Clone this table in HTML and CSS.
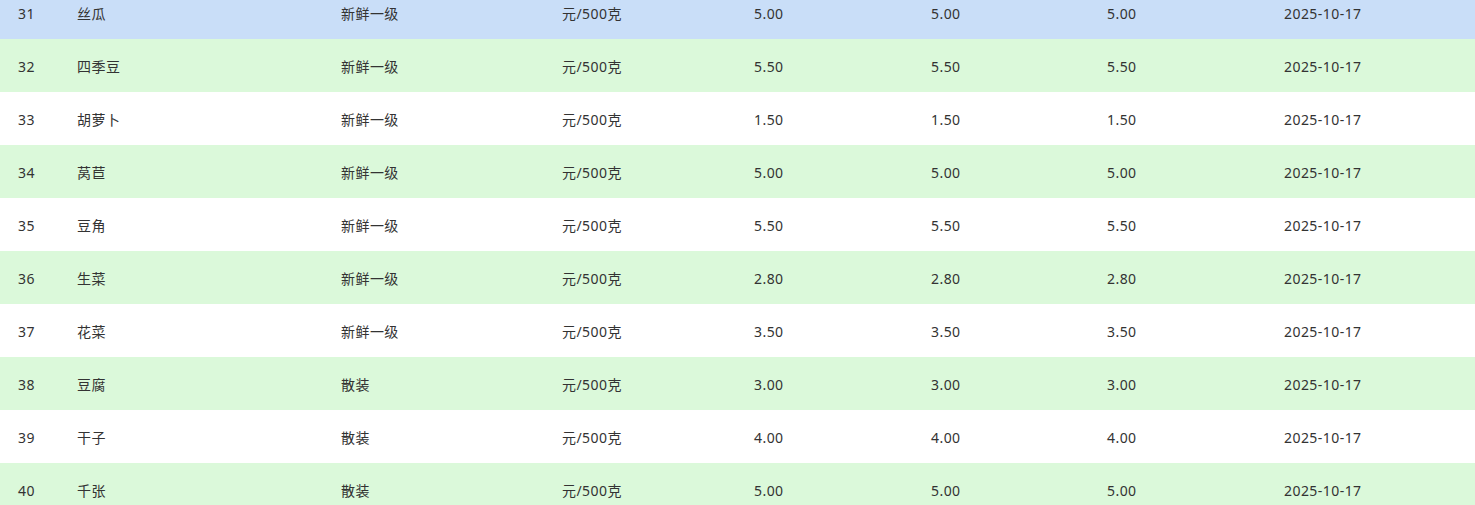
FILE: index.html
```html
<!DOCTYPE html>
<html lang="zh-CN">
<head>
<meta charset="utf-8">
<title>价格表</title>
<link rel="stylesheet" href="styles.css">
</head>
<body>
<div class="viewport">
<table class="price-table">
<colgroup>
<col class="c-no"><col class="c-name"><col class="c-spec"><col class="c-unit"><col class="c-p1"><col class="c-p2"><col class="c-p3"><col class="c-date">
</colgroup>
<tbody>
<tr class="row selected"><td>31</td><td>丝瓜</td><td>新鲜一级</td><td>元/500克</td><td>5.00</td><td>5.00</td><td>5.00</td><td>2025-10-17</td></tr>
<tr class="row alt"><td>32</td><td>四季豆</td><td>新鲜一级</td><td>元/500克</td><td>5.50</td><td>5.50</td><td>5.50</td><td>2025-10-17</td></tr>
<tr class="row"><td>33</td><td>胡萝卜</td><td>新鲜一级</td><td>元/500克</td><td>1.50</td><td>1.50</td><td>1.50</td><td>2025-10-17</td></tr>
<tr class="row alt"><td>34</td><td>莴苣</td><td>新鲜一级</td><td>元/500克</td><td>5.00</td><td>5.00</td><td>5.00</td><td>2025-10-17</td></tr>
<tr class="row"><td>35</td><td>豆角</td><td>新鲜一级</td><td>元/500克</td><td>5.50</td><td>5.50</td><td>5.50</td><td>2025-10-17</td></tr>
<tr class="row alt"><td>36</td><td>生菜</td><td>新鲜一级</td><td>元/500克</td><td>2.80</td><td>2.80</td><td>2.80</td><td>2025-10-17</td></tr>
<tr class="row"><td>37</td><td>花菜</td><td>新鲜一级</td><td>元/500克</td><td>3.50</td><td>3.50</td><td>3.50</td><td>2025-10-17</td></tr>
<tr class="row alt"><td>38</td><td>豆腐</td><td>散装</td><td>元/500克</td><td>3.00</td><td>3.00</td><td>3.00</td><td>2025-10-17</td></tr>
<tr class="row"><td>39</td><td>干子</td><td>散装</td><td>元/500克</td><td>4.00</td><td>4.00</td><td>4.00</td><td>2025-10-17</td></tr>
<tr class="row alt"><td>40</td><td>千张</td><td>散装</td><td>元/500克</td><td>5.00</td><td>5.00</td><td>5.00</td><td>2025-10-17</td></tr>
</tbody>
</table>
</div>
</body>
</html>
```
FILE: styles.css
```css
html, body {
  margin: 0;
  padding: 0;
  background: #fff;
}
.viewport {
  height: 505px;
  overflow: hidden;
}
.price-table {
  /* page is scrolled: first visible row is partially hidden */
  margin-top: -14px;
  width: 1475px;
  border-collapse: collapse;
  table-layout: fixed;
  font-family: "Noto Sans", "Noto Sans CJK SC", sans-serif;
  font-size: 14px;
  letter-spacing: 0.45px;
  color: #333;
}
.c-no { width: 59px; }
.c-name { width: 264px; }
.c-spec { width: 221px; }
.c-unit { width: 192px; }
.c-p1 { width: 177px; }
.c-p2 { width: 176px; }
.c-p3 { width: 177px; }
.c-date { width: 209px; }
.row td {
  height: 53px;
  padding: 1px 0 0 18px;
  box-sizing: border-box;
  text-align: left;
  vertical-align: middle;
  white-space: nowrap;
}
.row { background: #fff; }
.row.alt { background: #dbf9da; }
.row.selected { background: #c9def8; }
```
